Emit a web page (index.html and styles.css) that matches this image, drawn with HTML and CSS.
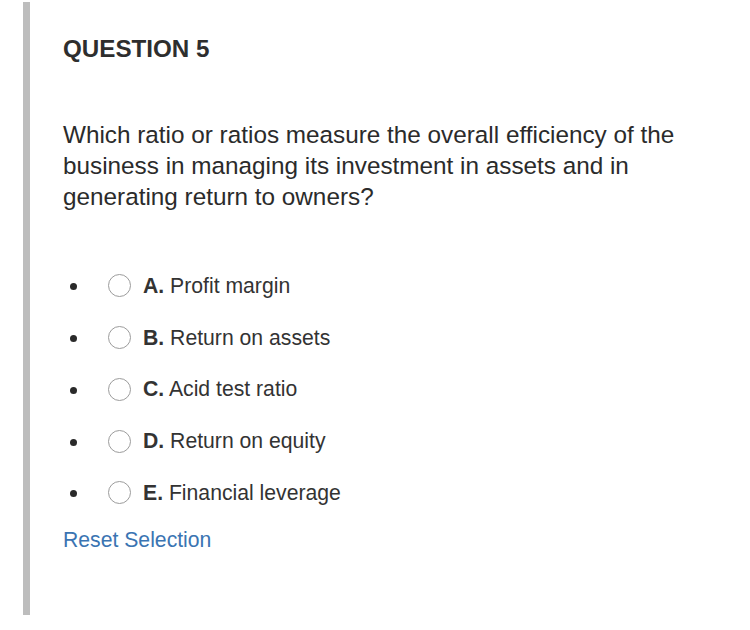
FILE: index.html
```html
<!DOCTYPE html>
<html lang="en">
<head>
<meta charset="utf-8">
<title>Question 5</title>
<link rel="stylesheet" href="styles.css">
</head>
<body>
<div class="question">
  <h2 class="title">QUESTION 5</h2>
  <p class="prompt">Which ratio or ratios measure the overall efficiency of the business in managing its investment in assets and in generating return to owners?</p>
  <ul class="options">
    <li class="option"><span class="dot"></span><span class="radio"></span><span class="label"><b>A.</b> Profit margin</span></li>
    <li class="option"><span class="dot"></span><span class="radio"></span><span class="label"><b>B.</b> Return on assets</span></li>
    <li class="option"><span class="dot"></span><span class="radio"></span><span class="label"><b>C.</b> Acid test ratio</span></li>
    <li class="option"><span class="dot"></span><span class="radio"></span><span class="label"><b>D.</b> Return on equity</span></li>
    <li class="option"><span class="dot"></span><span class="radio"></span><span class="label"><b>E.</b> Financial leverage</span></li>
  </ul>
  <a class="reset" href="#">Reset Selection</a>
</div>
</body>
</html>
```

FILE: styles.css
```css
html, body {
  margin: 0;
  padding: 0;
  background: #ffffff;
}

body {
  font-family: "Liberation Sans", Arial, sans-serif;
  color: #333333;
}

.question {
  margin: 2px 0 0 23px;
  border-left: 7px solid #bdbdbd;
  padding: 33px 0 63px 33px;
  width: 650px;
  box-sizing: content-box;
}

.title {
  margin: 0;
  font-size: 24.2px;
  line-height: 28px;
  font-weight: bold;
  color: #2e2e2e;
}

.prompt {
  margin: 56px 0 0 0;
  font-size: 24.3px;
  line-height: 31px;
  color: #2b2b2b;
  width: 645px;
}

.options {
  list-style: none;
  margin: 48px 0 0 0;
  padding: 0;
}

.option {
  display: flex;
  align-items: center;
  height: 51.75px;
  font-size: 21.2px;
}

.dot {
  width: 7px;
  height: 7px;
  border-radius: 50%;
  background: #2a2a2a;
  margin-left: 6.5px;
  margin-top: 2px;
}

.radio {
  width: 21px;
  height: 21px;
  border: 1.5px solid #9c9c9c;
  border-radius: 50%;
  margin-left: 31.5px;
  background: #fff;
}

.label {
  margin-left: 12px;
  line-height: 24px;
  color: #333333;
}

.label b {
  color: #333333;
}

.reset {
  display: block;
  margin-top: 9px;
  font-size: 21.2px;
  line-height: 24px;
  color: #3a74b2;
  text-decoration: none;
  width: max-content;
}
```
